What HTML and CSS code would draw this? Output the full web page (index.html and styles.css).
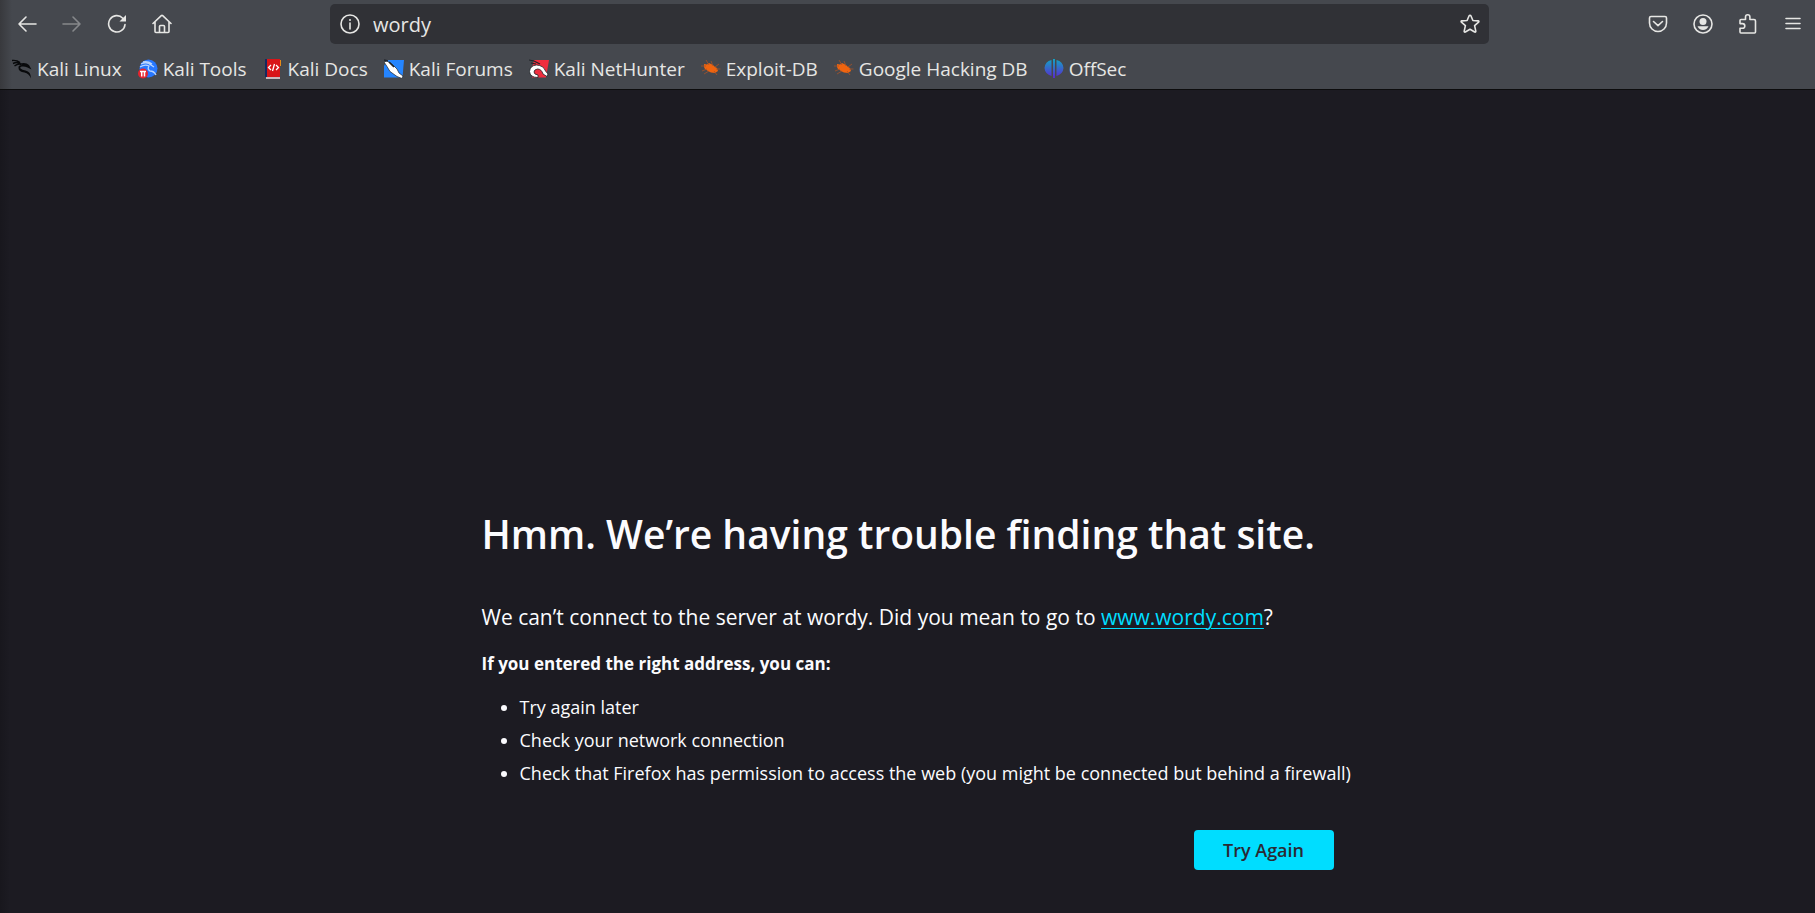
FILE: index.html
```html
<!DOCTYPE html>
<html lang="en">
<head>
    <meta charset="UTF-8">
    <meta name="viewport" content="width=device-width, initial-scale=1.0">
    <title>Server Not Found</title>
    <link rel="stylesheet" href="styles.css">
</head>
<body>
    <header class="browser">
        <div class="toolbar">
            <div class="buttons">
                <button type="button" aria-label="Back">
                    <svg class="icon" viewBox="0 0 20 20"><path d="M19 10H2M9 3l-7 7 7 7"/></svg>
                </button>
                <button type="button" aria-label="Forward" disabled>
                    <svg class="icon" viewBox="0 0 20 20"><path d="M1 10h17M11 3l7 7-7 7"/></svg>
                </button>
                <button type="button" aria-label="Reload">
                    <svg class="icon" viewBox="0 0 20 20"><path d="M18 10.500A8.200 8.200 0 1 1 15.800 4.200"/><path class="fill" d="M19 1v6.500h-6.500z"/></svg>
                </button>
                <button type="button" aria-label="Home">
                    <svg class="icon" viewBox="0 0 20 20"><path d="M1 9.500L9.300 1.600q.7-.6 1.400 0L19 9.500M3 8v9.500q0 1 1 1h12q1 0 1-1V8M7.500 18v-5.500q0-1 1-1h3q1 0 1 1V18"/></svg>
                </button>
            </div>
            <div class="urlbar">
                <svg class="icon" viewBox="0 0 20 20"><circle cx="10" cy="10" r="9"/><path d="M10 9v6"/><circle class="fill" cx="10" cy="6" r="1"/></svg>
                <input type="text" value="wordy" aria-label="Address">
                <button type="button" aria-label="Bookmark this page">
                    <svg class="icon" viewBox="0 0 20 20"><path d="M10 1.200q.6 0 .9.600l2 4.700 5.200.4q1.300.3.500 1.300l-4 3.500 1.200 5.400q.1 1.300-1.100.9L10 15.200 5.300 18q-1.200.4-1.100-.9l1.200-5.400-4-3.500q-.8-1 .5-1.300l5.200-.4 2-4.700q.3-.6.900-.6z"/></svg>
                </button>
            </div>
            <div class="buttons">
                <button type="button" aria-label="Save to Pocket">
                    <svg class="icon" viewBox="0 0 20 20"><path d="M3 2.500h14q1.500 0 1.500 1.500v5a8.500 8.500 0 0 1-17 0V4Q1.500 2.500 3 2.500zM5.500 7.500L10 11.700l4.500-4.200"/></svg>
                </button>
                <button type="button" aria-label="Account">
                    <svg class="icon" viewBox="0 0 20 20"><circle cx="10" cy="10" r="9"/><circle class="fill" cx="10" cy="7.500" r="3.500"/><path class="fill" d="M4.500 12.300h11q-1.500 3.700-5.500 3.700t-5.500-3.700z"/></svg>
                </button>
                <button type="button" aria-label="Extensions">
                    <svg class="icon" viewBox="0 0 20 20"><path d="M2 8.500V6.500q0-1 1-1h4.500V3a2.200 2.200 0 0 1 4.400 0v2.500H16q1.500 0 1.500 1.500v11q0 1-1 1H3q-1 0-1-1v-3.800h2.500a2.300 2.300 0 0 0 0-4.600H2z"/></svg>
                </button>
                <button type="button" aria-label="Menu">
                    <svg class="icon" viewBox="0 0 20 20"><path d="M3 4.500h14M3 9.500h14M3 14.500h14"/></svg>
                </button>
            </div>
        </div>
        <nav class="bookmarks">
            <a href="#">
                <svg class="favicon" viewBox="0 0 20 20"><path d="M0 1.500q5-.5 8 2M1 4.500q4-2 7.500 0M2.500 7q4-3 7-1.500" fill="none" stroke="#08090b" stroke-width="1.400"/><path d="M8 4.500q6-1.500 9 1.500l2.500 4.500-4-2q-3-1.500-5.500-1Q7.500 8 8.500 9.500q1.500 1.500 5 2 5.500 1 5.500 8-2-5-6.500-6-6-.7-6-4.500Q6 6 10 6z" fill="#08090b"/></svg>
                Kali Linux
            </a>
            <a href="#">
                <svg class="favicon" viewBox="0 0 20 20"><circle cx="10.500" cy="9.500" r="9" fill="#2777ff"/><path d="M3 5q6-3 10 1l3 2M2 8q5-3 9-1-2 3 1 5 4 0 6 4M5 3q5-1 9 2" fill="none" stroke="#b9d5ff" stroke-width="1.300"/><circle cx="5" cy="14.500" r="5" fill="#e5242f"/><path d="M2 12.500h6M3.700 12.500v5M6.500 12.500v5" stroke="#fff" stroke-width="1.500"/></svg>
                Kali Tools
            </a>
            <a href="#">
                <svg class="favicon" viewBox="0 0 20 20"><path d="M2 0h3v18H2z" fill="#152a61"/><path d="M4 0h13v18H4z" fill="#d91418"/><path d="M17 1h1v6h-1z" fill="#e88b18"/><path d="M3 18h14v2H3z" fill="#c9b9bd"/><path d="M8 6L5.500 8.500 8 11M13 6l2.500 2.500L13 11M11.500 5l-2 7" fill="none" stroke="#fff" stroke-width="1.300"/></svg>
                Kali Docs
            </a>
            <a href="#">
                <svg class="favicon" viewBox="0 0 20 20"><path d="M3 1h17l-1.500 17.500H0V7z" fill="#2585ff"/><path d="M0 3l3-1 5 3 5 5 2 4 4 3-1 2.500-5-2-7-5-3-5z" fill="#fff" stroke="#20242a" stroke-width=".7"/><path d="M0 1l4 1M5 3l5 5" stroke="#20242a" stroke-width="1.500"/></svg>
                Kali Forums
            </a>
            <a href="#">
                <svg class="favicon" viewBox="0 0 20 20"><path d="M5 1h15l-3 17.500H3L3 9z" fill="#ef2d3e"/><path d="M9 18.500q-8 0-8.500-6 .5-6 7-6.500 7 .5 9 6l2.500 3-1 2.500-4-2.500q-1.500-5-5.500-5-3.500.5-3.500 3 0 2.500 4 3z" fill="#fff" stroke="#20242a" stroke-width=".8"/><path d="M0 1l5 1 6 3M2 4l5 1" fill="none" stroke="#20242a" stroke-width="1.200"/></svg>
                Kali NetHunter
            </a>
            <a href="#">
                <svg class="favicon" viewBox="0 0 20 20"><path d="M3 5l3 .5L8 4l4 2 2 2 2 1 1 3-3 2-4-.5-3-1.500-3-2-1-2z" fill="#f0640f"/><path d="M0 7h5M1 12l5-2M3 15l5-3M5 1l3 5M10 2l2 5M14 8l4-3M15 10h4.500M13 12l3 4" stroke="#a65328" stroke-width=".8"/></svg>
                Exploit-DB
            </a>
            <a href="#">
                <svg class="favicon" viewBox="0 0 20 20"><path d="M3 5l3 .5L8 4l4 2 2 2 2 1 1 3-3 2-4-.5-3-1.500-3-2-1-2z" fill="#f0640f"/><path d="M0 7h5M1 12l5-2M3 15l5-3M5 1l3 5M10 2l2 5M14 8l4-3M15 10h4.500M13 12l3 4" stroke="#a65328" stroke-width=".8"/></svg>
                Google Hacking DB
            </a>
            <a href="#">
                <svg class="favicon" viewBox="0 0 20 20"><defs><linearGradient id="offsec" gradientUnits="userSpaceOnUse" x1="0" y1="0" x2="0" y2="19"><stop offset="0" stop-color="#12a5c5"/><stop offset="1" stop-color="#5b27cf"/></linearGradient></defs><path d="M7.500 1v16Q1 15 .5 9 1 2.500 7.500 1zM12.500 1v16q6.500-2 7-8-.5-6.500-7-8zM9 0h2v19H9z" fill="url(#offsec)"/></svg>
                OffSec
            </a>
        </nav>
    </header>
    <main class="error-page">
        <div class="container">
            <h1>Hmm. We’re having trouble finding that site.</h1>
            <p class="intro">We can’t connect to the server at wordy. Did you mean to go to <a href="#">www.wordy.com</a>?</p>
            <p class="advice"><strong>If you entered the right address, you can:</strong></p>
            <ul>
                <li>Try again later</li>
                <li>Check your network connection</li>
                <li>Check that Firefox has permission to access the web (you might be connected but behind a firewall)</li>
            </ul>
            <button type="button" class="try-again">Try Again</button>
        </div>
    </main>
</body>
</html>
```
FILE: styles.css
```css
* {
    box-sizing: border-box;
}
body {
    margin: 0;
    min-height: 100vh;
    display: flex;
    flex-direction: column;
    font-family: 'Open Sans', 'Noto Sans', sans-serif;
    background-color: #1c1b22;
    color: #fbfbfe;
}
button {
    font-family: inherit;
    border: none;
    cursor: pointer;
}
.browser {
    background: linear-gradient(to right, #38393d, #45484e 12px);
    border-bottom: 1px solid #0c0c0d;
    color: #e6e6e4;
}
.toolbar {
    display: flex;
    justify-content: space-between;
    align-items: center;
    height: 48px;
    padding: 0 0 0 4px;
}
.buttons {
    display: flex;
}
.buttons button, .urlbar button {
    display: flex;
    align-items: center;
    justify-content: center;
    width: 45px;
    height: 40px;
    padding: 0;
    background: none;
    color: inherit;
}
.buttons button:disabled {
    color: #86888b;
}
.icon {
    width: 20px;
    height: 20px;
    flex: none;
    fill: none;
    stroke: currentColor;
    stroke-width: 1.6;
    stroke-linecap: round;
    stroke-linejoin: round;
}
.icon .fill {
    fill: currentColor;
    stroke: none;
}
.urlbar {
    display: flex;
    align-items: center;
    width: 64%;
    height: 40px;
    padding-left: 10px;
    border-radius: 5px;
    background-color: #303136;
}
.urlbar input {
    flex: 1;
    min-width: 0;
    padding: 0 13px;
    border: none;
    outline: none;
    background: none;
    color: inherit;
    font-family: inherit;
    font-size: 20px;
}
.urlbar button {
    width: 38px;
}
.bookmarks {
    display: flex;
    align-items: center;
    gap: 16px;
    height: 41px;
    padding: 0 12px;
    overflow: hidden;
}
.bookmarks a {
    display: flex;
    align-items: center;
    gap: 5px;
    color: inherit;
    font-size: 19px;
    text-decoration: none;
    white-space: nowrap;
}
.favicon {
    width: 20px;
    height: 20px;
    flex: none;
}
.error-page {
    flex: 1;
    display: flex;
    flex-direction: column;
    justify-content: flex-end;
    align-items: center;
    padding: 40px 24px 43px;
    background: linear-gradient(to right, #18171d, #1c1b22 10px);
}
.container {
    width: 100%;
    max-width: 852px;
    display: flex;
    flex-direction: column;
}
h1 {
    margin: 0 0 43px;
    font-size: 39px;
    font-weight: 600;
    line-height: 48px;
}
p {
    margin: 0;
}
.intro {
    margin-bottom: 16px;
    font-size: 21px;
    line-height: 32px;
}
.intro a {
    color: #00ddff;
    text-decoration-thickness: 1px;
    text-underline-offset: 3px;
}
.advice {
    margin-bottom: 12px;
    font-size: 17px;
    line-height: 30px;
}
ul {
    margin: 0 -24px 40px 0;
    padding-left: 38px;
    font-size: 18px;
    line-height: 33px;
}
.try-again {
    align-self: flex-end;
    min-width: 140px;
    height: 40px;
    padding: 0 24px;
    border-radius: 4px;
    background-color: #00ddff;
    color: #2b2a33;
    font-size: 18px;
    font-weight: 600;
}
```
